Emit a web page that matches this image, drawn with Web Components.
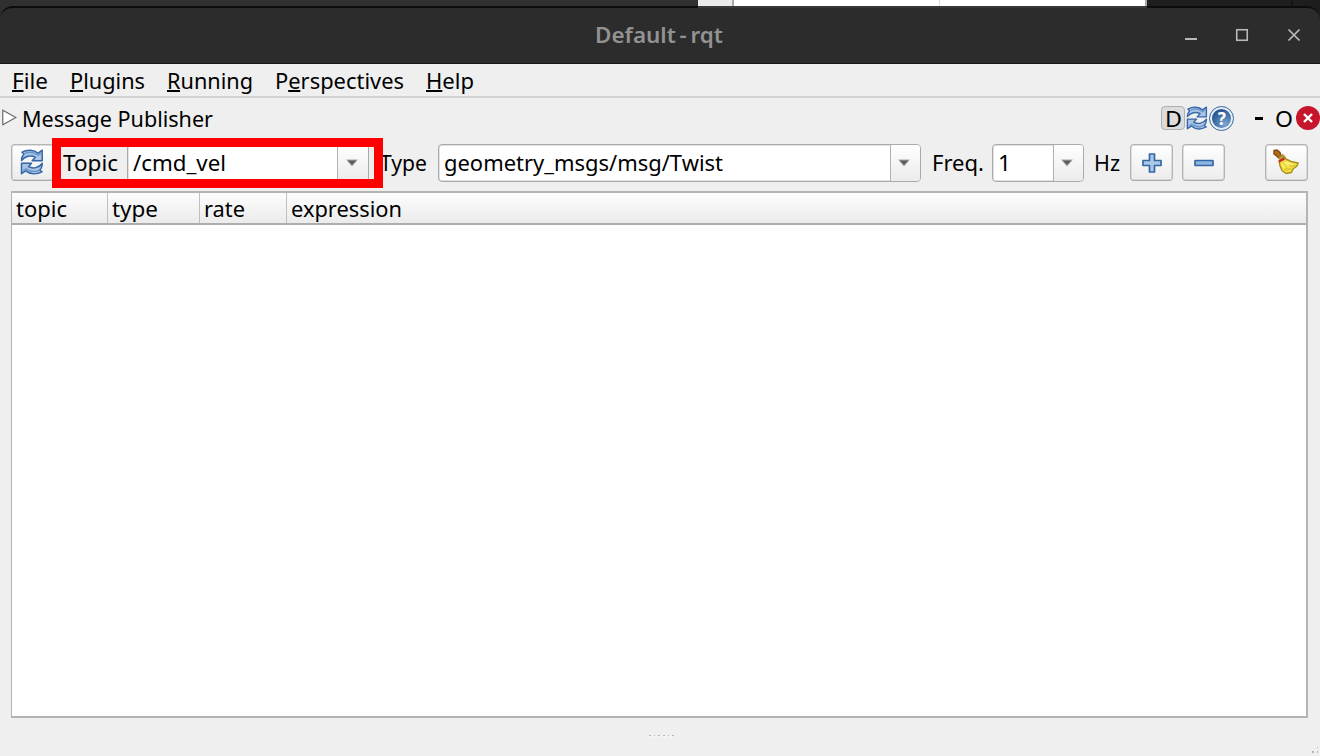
<!DOCTYPE html>
<html lang="en">
<head>
<meta charset="utf-8">
<title>Default - rqt</title>
<style>
html,body{margin:0;height:100%;overflow:hidden;background:#2e2e2e}
</style>
</head>
<body>
<rqt-window></rqt-window>
<script>
const define = (name, html, setup) => {
  const tpl = document.createElement('template');
  tpl.innerHTML = html;
  customElements.define(name, class extends HTMLElement {
    constructor() {
      super();
      this.attachShadow({ mode: 'open' }).append(tpl.content.cloneNode(true));
    }
    connectedCallback() { if (setup) setup(this, this.shadowRoot); }
  });
};

/* Label condensed or widened to a given width; "key" is the index of the mnemonic letter. */
define('fit-text', `<style>
:host{display:block;flex:none;white-space:pre;height:30px;line-height:30px}
span{display:inline-block;transform-origin:0 50%}
i{font-style:normal;display:inline-block;position:relative}
i::after{content:"";position:absolute;left:0;right:0;top:24px;height:2px;background:currentColor}
</style><span></span>`, (host, root) => {
  const span = root.querySelector('span');
  const text = host.getAttribute('text');
  if (host.hasAttribute('key')) {
    const k = +host.getAttribute('key');
    const i = document.createElement('i');
    i.textContent = text[k];
    span.replaceChildren(text.slice(0, k), i, text.slice(k + 1));
  } else span.textContent = text;
  const w = +host.getAttribute('w');
  host.style.width = w + 'px';
  span.style.transform = `scaleX(${w / span.getBoundingClientRect().width})`;
});

define('refresh-icon', `<style>:host{display:block;width:24px;height:26px}svg{display:block;width:100%;height:100%}</style>
<svg viewBox="0 0 24 26"><g fill="#a9c4e4" stroke="#3567a8" stroke-width="1.5" stroke-linejoin="round">
<path d="M1.5 11.5C1.5 8 3 6 4 5L2 3.2C7 .4 14 .4 18.2 4.2L22.2 1.2V11.8H12.2L15.3 8.2C11 5.8 5 7 1.5 11.5Z"/>
<path d="M22.3 14.3C22 18 21 20 19.7 21L22 22.8C16.5 25.6 10 25.3 5.6 21.8L1.5 24.7V14.2H11.5L8.5 17.7C13 20 19 19 22.3 14.3Z"/></g>
<path d="M5 4.5Q12 1.5 18 6L21 4M19 21.5Q12 24 6 20L3 22" fill="none" stroke="#6d98cb" stroke-width="1.6"/></svg>`);

define('help-icon', `<style>:host{display:block;width:25px;height:25px}.o{width:25px;height:25px;box-sizing:border-box;border:1.5px solid #3767a3;border-radius:50%;padding:2px;background:#e6eef6}
.b{height:19px;border-radius:50%;background:radial-gradient(circle at 70% 80%,#7aa5d3,#28548f 75%);color:#fff;text-align:center;font:bold 17px/19px "Noto Sans",sans-serif}</style>
<div class="o"><div class="b">?</div></div>`);

define('broom-icon', `<style>:host{display:block;width:26px;height:26px}svg{display:block}</style>
<svg width="26" height="26" viewBox="0 0 26 26">
<path d="M6 12L11 7L13 10L18 12.5L25.2 14L24 17L20 20L18.5 23.5L13 24.5L9 21.5L7 17Z" fill="#efdc40" stroke="#a9911f" stroke-width="1.4" stroke-linejoin="round"/>
<path d="M9 15L12 20M12 13L17 18M14 13L20 16" stroke="#fff47a" stroke-width="1.4"/>
<path d="M11 20L18 20M16 17L22 17" stroke="#d3b926" stroke-width="1.2"/>
<path d="M1 1.5L4 1L7 3.5L8 7L6 9L3 6.5L1 5Z" fill="#b36b13" stroke="#804a10" stroke-width="1.4"/>
<path d="M5.5 10L10.5 5.500" stroke="#b0922a" stroke-width="2.2"/><path d="M6 12.5L11.5 9.5" stroke="#ca2430" stroke-width="2.2"/></svg>`);

define('tool-button', `<style>:host{display:flex;flex:none;box-sizing:border-box;width:43px;height:37px;border:1px solid #b4b4b4;border-bottom-color:#aaa;border-radius:4px;background:linear-gradient(#fff,#ececec);align-items:center;justify-content:center;box-shadow:inset 0 0 0 .5px #c2c2c2}</style><slot></slot>`);

define('combo-box', `<style>:host{display:flex;flex:none;box-sizing:border-box;height:38px;border:1px solid #aaa;border-radius:4px;background:#fff;overflow:hidden;align-items:center;box-shadow:inset 0 0 0 .5px #c4c4c4}
.t{flex:1;padding-left:5px}.a{width:var(--arrow-width,30px);height:100%;box-sizing:border-box;border-left:1px solid #b0b0b0;padding-right:3px;background:linear-gradient(#fff,#ebebeb);display:flex;align-items:center;justify-content:center}</style>
<div class="t"><slot></slot></div><div class="a"><svg width="12" height="8" viewBox="0 0 12 8"><path d="M0 .5H12L6 7.5Z" fill="#aaa"/><path d="M1.5 1.5H10.5L6 6Z" fill="#5c5c5c"/></svg></div>`);

define('title-bar', `<style>
:host{display:block;height:64px;background:linear-gradient(90deg,#303030 698px,#eaeaea 698px 732px,#aaa 732px 734px,#fff 734px 939px,#ddd 939px 940px,#fff 940px 1145px,#aaa 1145px 1147px,#1e1e1e 1147px 1291px,#151515 1291px 1293px,#1e1e1e 1293px)}
.in{padding-top:6px}
.bar{box-sizing:border-box;height:58px;border-top:2px solid transparent;border-bottom:1px solid #161616;border-radius:13px 13px 0 0;display:flex;align-items:center;color:#929292;font:600 21.5px "Noto Sans",sans-serif;
background:linear-gradient(90deg,transparent 698px,#363a36 698px 1147px,transparent 1147px) 0 0/100% 2px no-repeat border-box,#2c2c2c}
.bar::before{content:"";position:absolute;left:0;top:6px;width:698px;height:20px;box-sizing:border-box;border-top:2px solid #0c0c0c;border-radius:13px 0 0 0}
.bar::after{content:"";position:absolute;left:1147px;top:6px;width:173px;height:20px;box-sizing:border-box;border-top:2px solid #0c0c0c;border-radius:0 13px 0 0}
fit-text{margin:-1px 0 0 595px;word-spacing:-2px}
.c{margin:-2px 0 0 462px;display:block}
</style><div class="in"><div class="bar"><fit-text text="Default - rqt" w="128"></fit-text>
<svg class="c" width="119" height="16" viewBox="1 0 119 16" fill="none" stroke="#b9b9b9"><path d="M1 12H13" stroke-width="2"/><rect x="52.75" y="2.75" width="10.5" height="10.5" stroke-width="1.6"/><path d="M104.5 2.5L115.5 13.5M115.5 2.5L104.5 13.5" stroke-width="1.7"/></svg></div></div>`);

define('menu-bar', `<style>:host{display:flex;box-sizing:border-box;height:34px;border-bottom:2px solid #d3d3d3;align-items:center;padding:1px 0 0 12px}fit-text{margin-right:22px}</style>
<fit-text text="File" key="0" w="36"></fit-text><fit-text text="Plugins" key="0" w="75"></fit-text><fit-text text="Running" key="0" w="86"></fit-text><fit-text text="Perspectives" key="1" w="129"></fit-text><fit-text text="Help" key="0" w="48"></fit-text>`);

define('dock-title', `<style>:host{display:flex;height:41px;align-items:center;padding-left:2px}
.tri{margin:-2px 5px 0 0;display:block}
.d{box-sizing:border-box;width:25px;height:24px;border:1px solid #b0b0b0;border-radius:4px;background:#dcdcdc;margin:-1px 0 0 947px;display:flex;align-items:center;justify-content:center}
.d fit-text{margin-top:2px}
refresh-icon{width:23px;height:24px;margin:-1px 0 0 1px}help-icon{margin:-1px 0 0 1px}
.m{width:8px;height:3px;background:#000;margin:0 0 0 21px}.o{margin-left:12px}
.x{margin:-2px 0 0 3px;flex:none}</style>
<svg class="tri" width="16" height="18" viewBox="0 0 16 18"><path d="M.8 1V16L14.5 8.5Z" fill="#fff" stroke="#666" stroke-width="1.2"/></svg>
<fit-text text="Message Publisher" w="191"></fit-text><div style="width:1px"></div><div class="d"><fit-text text="D" w="17"></fit-text></div><refresh-icon></refresh-icon><help-icon></help-icon><div class="m"></div><fit-text class="o" text="O" w="18"></fit-text>
<svg class="x" width="24" height="24" viewBox="0 0 24 24"><circle cx="12" cy="12" r="12" fill="#c7162b"/><path d="M8 8L16 16M16 8L8 16" stroke="#fff" stroke-width="2.4"/></svg>`);

define('publisher-toolbar', `<style>:host{display:flex;position:relative;height:48px;align-items:center;padding-left:11px}
tool-button{margin-top:-1px}
tool-button broom-icon{margin:-1px 1px 0 0}
tool-button refresh-icon{margin:-1px 2px 0 0}
.mark{position:absolute;left:52px;top:-1px;width:331px;height:50px;box-sizing:border-box;border:9px solid #f00}</style>
<tool-button><refresh-icon></refresh-icon></tool-button>
<fit-text text="Topic" w="55" style="margin-left:9px"></fit-text>
<combo-box style="width:242px;margin-left:9px;--arrow-width:31px"><fit-text text="/cmd_vel" w="93"></fit-text></combo-box>
<fit-text text="Type" w="47" style="margin-left:11px"></fit-text>
<combo-box style="width:483px;margin-left:11px"><fit-text text="geometry_msgs/msg/Twist" w="279"></fit-text></combo-box>
<fit-text text="Freq." w="52" style="margin-left:11px"></fit-text>
<combo-box style="width:92px;margin-left:8px"><fit-text text="1" w="13"></fit-text></combo-box>
<fit-text text="Hz" w="26" style="margin-left:10px"></fit-text>
<tool-button style="margin-left:10px"><svg width="20" height="20" viewBox="0 0 20 20"><path d="M7.5 1H12.5V7.5H19V12.5H12.5V19H7.5V12.5H1V7.5H7.5Z" fill="#a9c8e8" stroke="#3467a5" stroke-width="1.7" stroke-linejoin="round"/></svg></tool-button>
<tool-button style="margin-left:9px"><svg width="20" height="20" viewBox="0 0 20 20"><rect x="1" y="7.5" width="18" height="5" rx=".5" fill="#8db5df" stroke="#3467a5" stroke-width="1.7"/></svg></tool-button>
<tool-button style="margin-left:40px"><broom-icon></broom-icon></tool-button>
<div class="mark"></div>`);

define('topic-table', `<style>:host{display:block;box-sizing:border-box;margin:4px 12px 0 11px;height:527px;border:solid #b4b4b4;border-width:2px 2px 2px 1px;background:#fff}
.h{display:flex;box-sizing:border-box;height:32px;border-bottom:2px solid #adadad;background:linear-gradient(#fdfdfd,#ebebeb)}
.h div{box-sizing:border-box;border-right:1px solid #c0c0c0;padding-left:4px;padding-top:1px}.h div:last-child{flex:1;border:0}</style>
<div class="h"><div style="width:96px"><fit-text text="topic" w="51"></fit-text></div><div style="width:92px"><fit-text text="type" w="46"></fit-text></div><div style="width:87px"><fit-text text="rate" w="41"></fit-text></div><div><fit-text text="expression" w="111"></fit-text></div></div>`);

define('dock-grips', `<style>:host{display:flex;height:38px;justify-content:space-between}svg{display:block}.a{margin:16px 0 0 649px}.b{margin-top:28px}</style>
<svg class="a" width="28" height="4"><path d="M0 1.5H2M5 1.5H6M9 1.5H11M14 1.5H16M19 1.5H20M23 1.5H25" stroke="#b8b8b8"/><path d="M0 3H26" stroke="#fafafa" stroke-dasharray="3 2"/></svg>
<svg class="b" width="10" height="10"><path d="M2 5h2v2H2zM7 5h1v2H7zM7 1h1v1H7z" fill="#b5b5b5"/></svg>`);

define('rqt-window', `<style>:host{display:block;width:1320px;height:756px;background:#efefef;color:#000;font:21.6px "Noto Sans",sans-serif;overflow:hidden}</style>
<title-bar></title-bar><menu-bar></menu-bar><dock-title></dock-title><publisher-toolbar></publisher-toolbar><topic-table></topic-table><dock-grips></dock-grips>`);
</script>
</body>
</html>
